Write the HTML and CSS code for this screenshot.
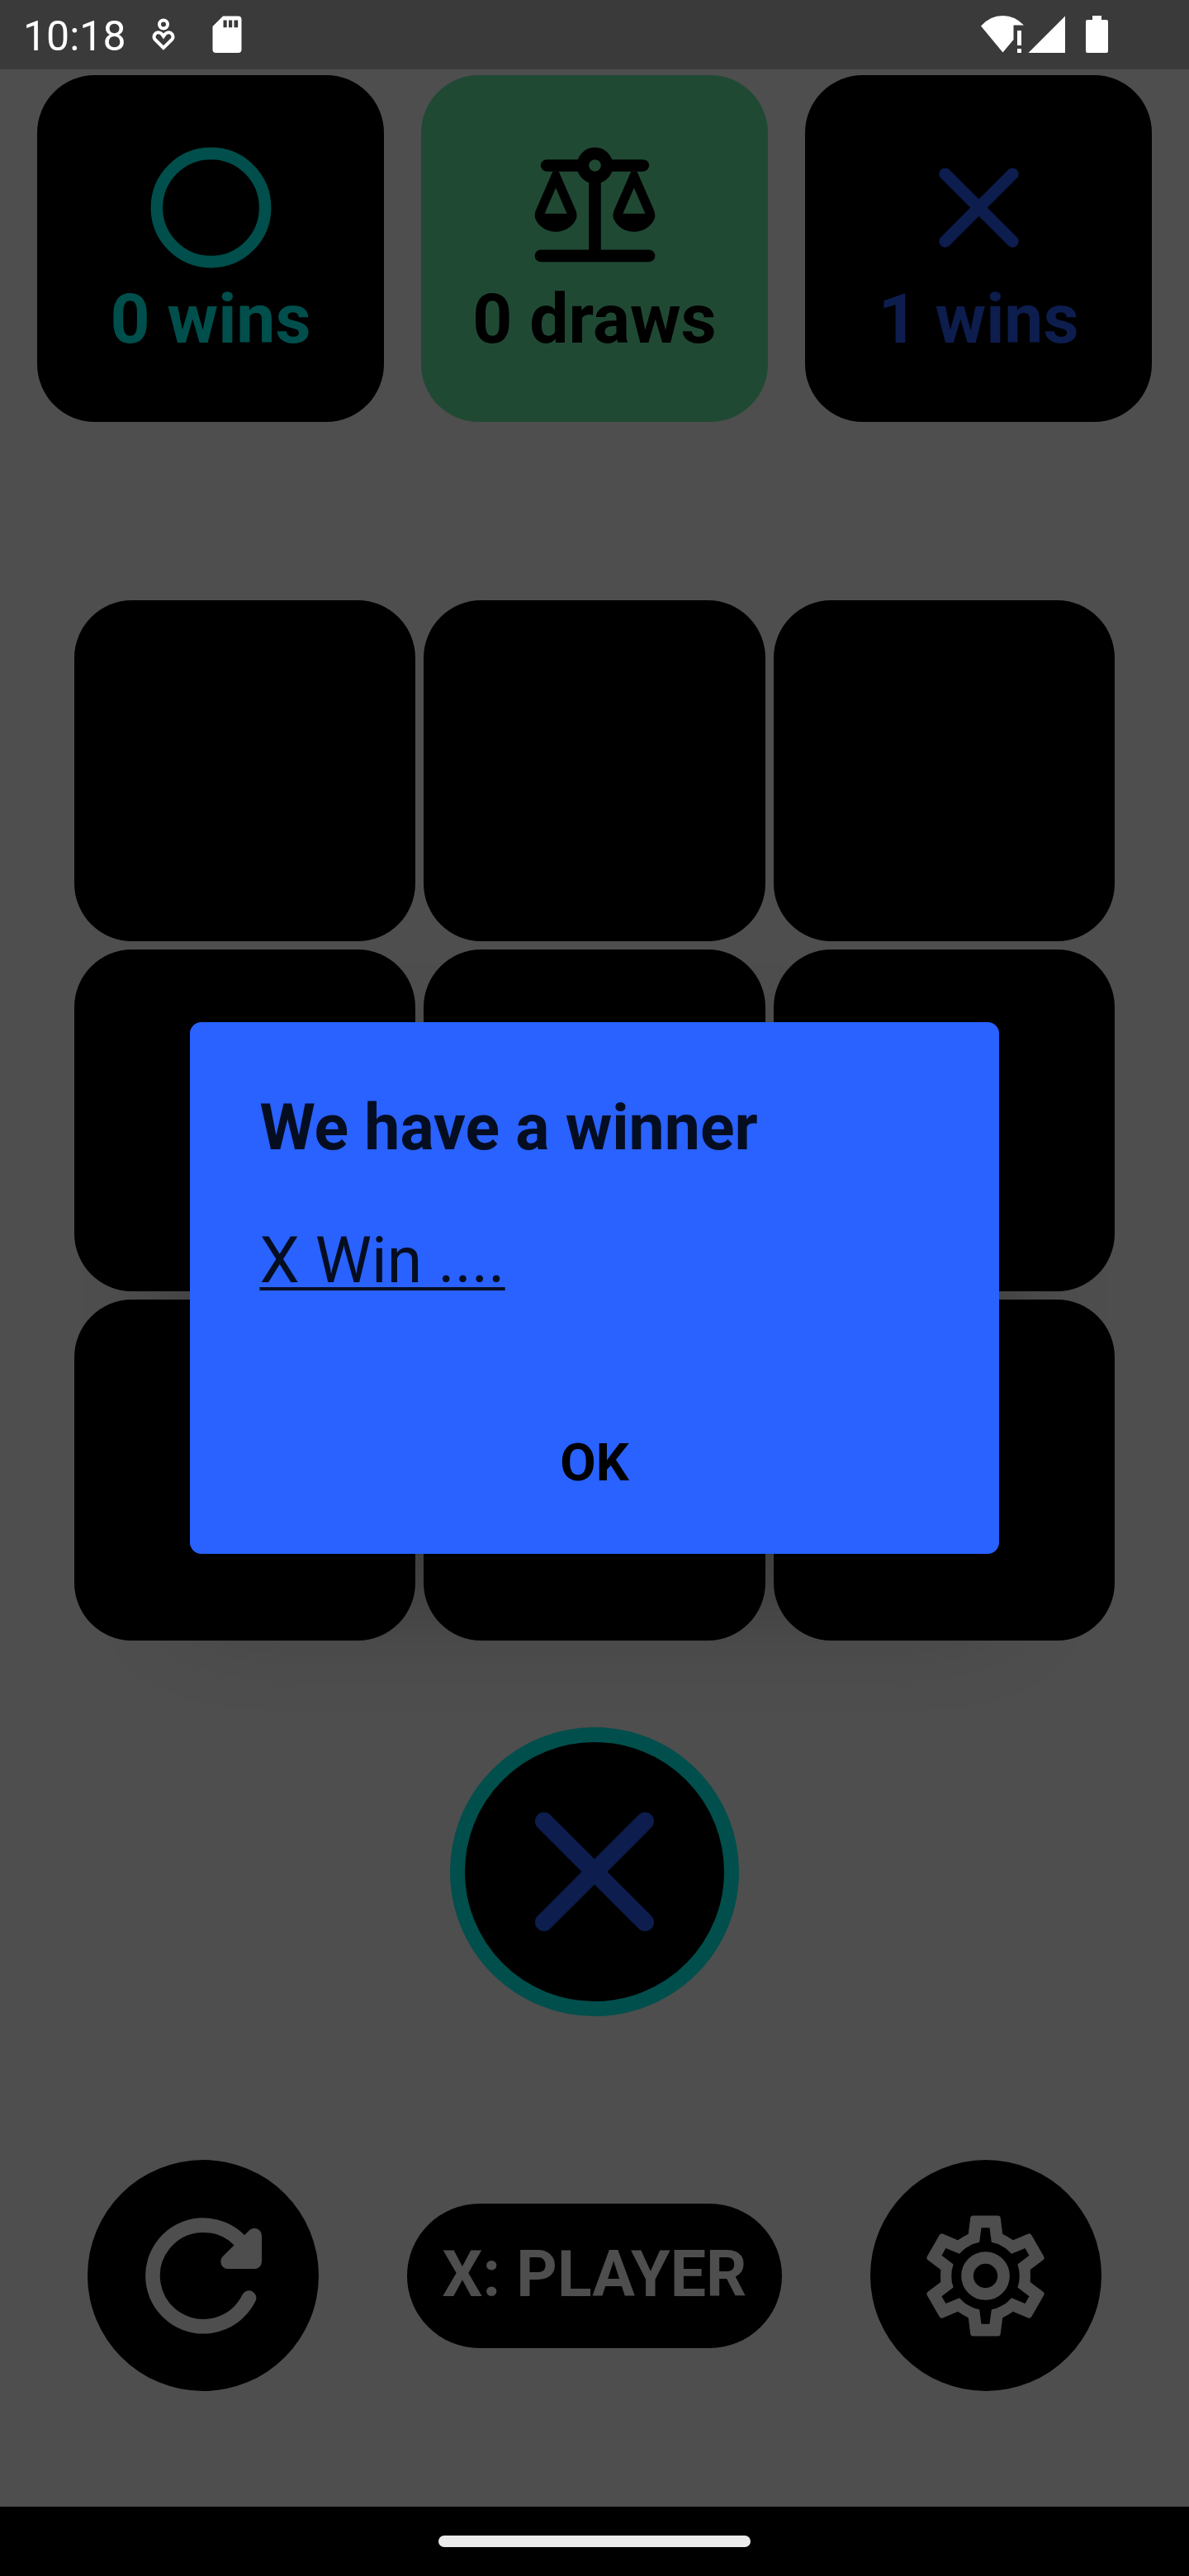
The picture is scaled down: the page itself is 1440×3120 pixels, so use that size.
FILE: index.html
```html
<!DOCTYPE html>
<html lang="en">
<head>
  <meta charset="utf-8">
  <meta name="viewport" content="width=device-width, initial-scale=1">
  <title>Tic Tac Toe</title>
  <link rel="stylesheet" href="styles.css">
</head>
<body>
  <header class="status-bar">
    <time class="clock">10:18</time>
    <svg class="status-heart" viewBox="0 0 28 40" aria-hidden="true">
      <circle cx="14" cy="7.500" r="5" fill="none" stroke="currentColor" stroke-width="4"/>
      <path d="M14 36 L3.600 25.600 A5.200 5.200 0 0 1 9.400 17.600 Q11.500 18 14 21.800 Q16.500 18 18.600 17.600 A5.200 5.200 0 0 1 24.400 25.600 Z" fill="none" stroke="currentColor" stroke-width="4"/>
    </svg>
    <svg class="status-sd" viewBox="0 0 36 46" aria-hidden="true">
      <path fill="currentColor" fill-rule="evenodd" d="M13 0.500 H31.500 Q35.500 0.500 35.500 4.500 V41 Q35.500 45 31.500 45 H4.500 Q0.500 45 0.500 41 V13 Z M13.500 5.500 V14.200 H17.700 V5.500 Z M20 5.500 V14.200 H24.200 V5.500 Z M26.500 5.500 V14.200 H31.200 V5.500 Z"/>
    </svg>
    <svg class="status-network" viewBox="0 0 102 46" aria-hidden="true">
      <path fill="currentColor" d="M0 12.500 Q11 0 26.500 0 Q41 0 52 11.500 H39.500 V29 L26.500 44.500 Z"/>
      <path fill="currentColor" d="M44 18 H49 V36 H44 Z M44 40 H49 V45 H44 Z"/>
      <path fill="currentColor" d="M57.500 45 L102 0.500 V45 Z"/>
    </svg>
    <svg class="status-battery" viewBox="0 0 27 46" aria-hidden="true">
      <path fill="currentColor" d="M8 0 H19 V5 H25 Q27 5 27 7 V43 Q27 45 25 45 H2 Q0 45 0 43 V7 Q0 5 2 5 H8 Z"/>
    </svg>
  </header>

  <main class="game">
    <section class="scores" aria-label="Score">
      <div class="score score-o">
        <svg class="icon" viewBox="0 0 24 24" aria-hidden="true">
          <circle cx="12" cy="12" r="9" fill="none" stroke="currentColor" stroke-width="2"/>
        </svg>
        <span>0 wins</span>
      </div>
      <div class="score score-draw">
        <svg class="icon" viewBox="0 0 24 24" aria-hidden="true">
          <g fill="none" stroke="currentColor" stroke-width="2" stroke-linecap="round">
            <path d="M3 20 H21 M12 8 V20 M4 5 H9.500 M14.500 5 H20"/>
            <circle cx="12" cy="5" r="2"/>
          </g>
          <g id="pan" fill="currentColor" fill-rule="evenodd">
            <path d="M5 6 L2.200 12.400 C2 12.900 1.950 13.400 2.100 13.800 C2.600 15.100 4 16 5.500 16 C7 16 8.400 15.100 8.900 13.800 C9.050 13.400 9 12.900 8.800 12.400 L6 6 Z M5.500 8.700 L7.350 13 H3.650 Z"/>
          </g>
          <use href="#pan" x="13"/>
        </svg>
        <span>0 draws</span>
      </div>
      <div class="score score-x">
        <svg class="icon" viewBox="0 0 24 24" aria-hidden="true">
          <path d="M6.400 6.400 L17.600 17.600 M17.600 6.400 L6.400 17.600" fill="none" stroke="currentColor" stroke-width="2" stroke-linecap="round"/>
        </svg>
        <span>1 wins</span>
      </div>
    </section>

    <section class="board" aria-label="Board">
      <button class="cell" type="button" aria-label="Row 1, column 1"></button>
      <button class="cell" type="button" aria-label="Row 1, column 2"></button>
      <button class="cell" type="button" aria-label="Row 1, column 3"></button>
      <button class="cell" type="button" aria-label="Row 2, column 1"></button>
      <button class="cell" type="button" aria-label="Row 2, column 2"></button>
      <button class="cell" type="button" aria-label="Row 2, column 3"></button>
      <button class="cell" type="button" aria-label="Row 3, column 1"></button>
      <button class="cell" type="button" aria-label="Row 3, column 2"></button>
      <button class="cell" type="button" aria-label="Row 3, column 3"></button>
    </section>

    <div class="turn" role="img" aria-label="Current player: X">
      <svg class="turn-icon" viewBox="0 0 24 24" aria-hidden="true">
        <path d="M6.400 6.400 L17.600 17.600 M17.600 6.400 L6.400 17.600" fill="none" stroke="currentColor" stroke-width="2" stroke-linecap="round"/>
      </svg>
    </div>

    <div class="actions">
      <button class="round-button" type="button" aria-label="Restart">
        <svg class="icon" viewBox="0 0 525 525" aria-hidden="true">
          <g fill="none" stroke="currentColor" stroke-width="53" stroke-linecap="round" stroke-linejoin="round">
            <path d="M392.500 132.500 A184 184 0 1 0 427.500 342.500"/>
            <path d="M447.500 116 V210.500 H351.500 Z" fill="currentColor"/>
          </g>
        </svg>
      </button>
      <button class="player-button" type="button">X: PLAYER</button>
      <button class="round-button" type="button" aria-label="Settings">
        <svg class="icon" viewBox="-262.500 -262.500 525 525" aria-hidden="true">
          <path id="tooth" fill="currentColor" d="M-84 -140 L-62 -152 L-55 -209 Q-54 -219 -44 -219 H44 Q54 -219 55 -209 L62 -152 L84 -140 L64 -106 A124 124 0 0 0 22 -122 L15 -175 H-15 L-22 -122 A124 124 0 0 0 -64 -106 Z"/>
          <use href="#tooth" transform="rotate(60)"/>
          <use href="#tooth" transform="rotate(120)"/>
          <use href="#tooth" transform="rotate(180)"/>
          <use href="#tooth" transform="rotate(240)"/>
          <use href="#tooth" transform="rotate(300)"/>
          <circle r="66" fill="none" stroke="currentColor" stroke-width="44"/>
        </svg>
      </button>
    </div>
  </main>

  <footer class="nav-bar"><span class="nav-handle"></span></footer>

  <div class="overlay">
    <div class="dialog" role="dialog" aria-modal="true" aria-labelledby="dialog-title">
      <h1 class="dialog-title" id="dialog-title">We have a winner</h1>
      <p class="dialog-message">X Win ....</p>
      <button class="dialog-ok" type="button">OK</button>
    </div>
  </div>
</body>
</html>
```

FILE: styles.css
```css
:root {
  --background: #4e4e4e;
  --status: #3a3a3a;
  --teal: #004f4c;
  --navy: #0d1d4e;
  --green: #204934;
  --blue: #2962ff;
}

* {
  box-sizing: border-box;
}

body {
  margin: 0;
  min-height: 100vh;
  display: flex;
  flex-direction: column;
  background: var(--background);
  font-family: Roboto, "Liberation Sans", sans-serif;
}

button {
  margin: 0;
  padding: 0;
  border: 0;
  font: inherit;
  cursor: pointer;
}

svg {
  display: block;
}

.status-bar {
  display: flex;
  align-items: center;
  height: 84px;
  padding: 0 98px 0 28px;
  background: var(--status);
  color: #fff;
}

.clock {
  padding-top: 3px;
  font-size: 50px;
  line-height: 58px;
}

.status-heart {
  width: 28px;
  height: 40px;
  margin-left: 31px;
}

.status-sd {
  width: 36px;
  height: 46px;
  margin-left: 45px;
}

.status-network {
  width: 102px;
  height: 46px;
  margin-left: auto;
}

.status-battery {
  width: 27px;
  height: 46px;
  margin-left: 25px;
}

.game {
  flex: 1;
  display: flex;
  flex-direction: column;
  padding: 7px 0 140px;
}

.scores {
  display: grid;
  grid-template-columns: repeat(3, 1fr);
  gap: 45px;
  padding: 0 45px;
}

.score {
  display: flex;
  flex-direction: column;
  align-items: center;
  aspect-ratio: 1;
  padding-top: 73px;
  border-radius: 70px;
  background: #000;
  font-size: 84px;
  font-weight: 700;
  line-height: 96px;
}

.score-o {
  color: var(--teal);
}

.score-draw {
  background: var(--green);
  color: #000;
}

.score-x {
  color: var(--navy);
}

.icon {
  width: 175px;
  height: 175px;
}

.board {
  display: grid;
  grid-template-columns: repeat(3, 1fr);
  gap: 10px;
  margin: 216px 90px 0;
}

.cell {
  aspect-ratio: 1;
  border-radius: 70px;
  background: #000;
}

.turn {
  display: flex;
  align-items: center;
  justify-content: center;
  align-self: center;
  width: 350px;
  height: 350px;
  margin-top: 105px;
  border: 18px solid var(--teal);
  border-radius: 50%;
  background: #000;
  color: var(--navy);
}

.turn-icon {
  width: 262px;
  height: 262px;
}

.actions {
  display: flex;
  align-items: center;
  justify-content: space-evenly;
  margin-top: 174px;
}

.round-button {
  display: flex;
  align-items: center;
  justify-content: center;
  width: 280px;
  height: 280px;
  border-radius: 50%;
  background: #000;
  color: var(--background);
}

.player-button {
  padding: 41px 43px 44px;
  border-radius: 88px;
  background: #000;
  color: var(--background);
  font-size: 77px;
  font-weight: 700;
  line-height: 90px;
}

.nav-bar {
  display: flex;
  align-items: center;
  justify-content: center;
  height: 84px;
  background: #000;
}

.nav-handle {
  width: 378px;
  height: 14px;
  border-radius: 7px;
  background: #ebebeb;
}

.overlay {
  position: fixed;
  inset: 0;
  display: flex;
  align-items: center;
  justify-content: center;
}

.dialog {
  width: 68%;
  padding-top: 83px;
  border-radius: 14px;
  background: var(--blue);
  box-shadow: 0 60px 130px rgba(0, 0, 0, 0.24);
  color: rgba(0, 0, 0, 0.87);
}

.dialog-title,
.dialog-message {
  margin: 0 84px;
  font-size: 77px;
  line-height: 90px;
}

.dialog-title {
  font-weight: 700;
}

.dialog-message {
  margin-top: 71px;
  text-decoration: underline;
  text-decoration-thickness: 4px;
  text-underline-offset: 6px;
}

.dialog-ok {
  display: block;
  width: 100%;
  margin-top: 90px;
  padding: 73px 0;
  background: none;
  color: #000;
  font-size: 63px;
  font-weight: 700;
  line-height: 74px;
}
```
